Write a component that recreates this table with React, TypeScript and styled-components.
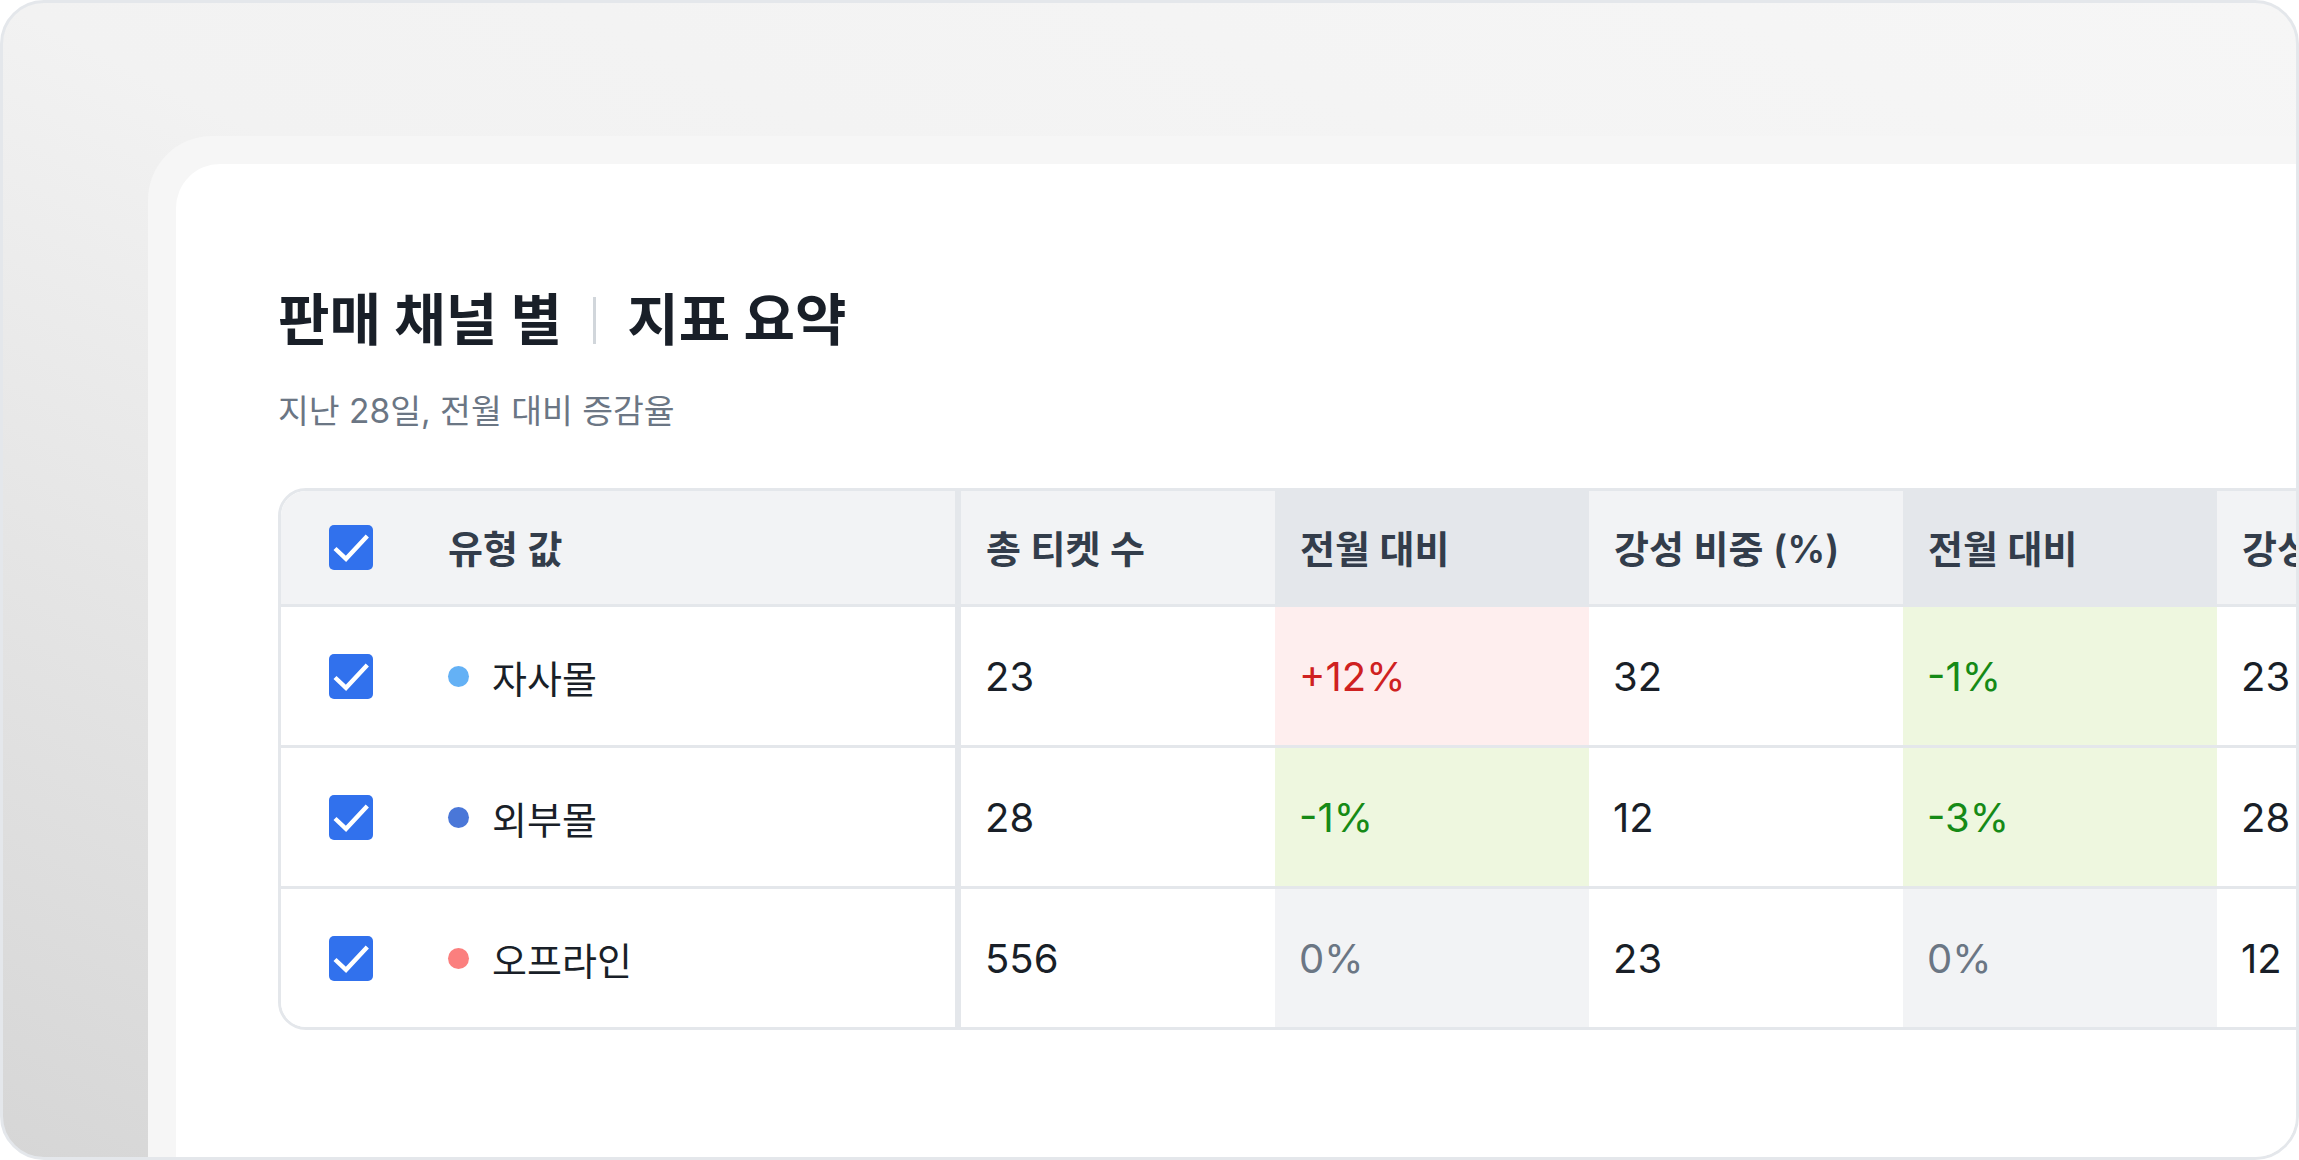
import React from "react";
import styled, { createGlobalStyle } from "styled-components";

const Global = createGlobalStyle`
  html, body { margin: 0; padding: 0; background: #ffffff; }
  body {
    font-family: Inter, "Noto Sans CJK KR", "Noto Sans", sans-serif;
    overflow: hidden;
  }
  * { box-sizing: border-box; }
`;

const Frame = styled.div`
  width: 2299px;
  height: 1160px;
  border: 3px solid #e4e7eb;
  border-radius: 44px;
  overflow: hidden;
  background: linear-gradient(to bottom left, #f6f6f6 0%, #f2f2f2 50%, #d6d6d6 100%);
  padding: 133px 0 0 145px;
  display: flex;
  flex-direction: column;
`;

const Layer = styled.div`
  flex: 1;
  background: #f6f6f6;
  border-top-left-radius: 64px;
  padding: 28px 0 0 28px;
  display: flex;
  flex-direction: column;
`;

const Panel = styled.div`
  flex: 1;
  background: #ffffff;
  border-top-left-radius: 44px;
  padding: 123px 0 0 102px;
  overflow: hidden;
`;

const Title = styled.h1`
  margin: 0;
  display: flex;
  align-items: center;
  gap: 31px;
  font-size: 56px;
  font-weight: 700;
  line-height: 67px;
  letter-spacing: 0;
  color: #191f28;
`;

const TitleDivider = styled.span`
  width: 3px;
  height: 47px;
  background: #d1d6db;
`;

const Subtitle = styled.p`
  margin: 35px 0 0;
  font-size: 33.5px;
  line-height: 45px;
  letter-spacing: 0;
  color: #6b7684;
`;

const Table = styled.div`
  margin-top: 54px;
  width: max-content;
  border: 3px solid #e4e7eb;
  border-radius: 28px;
  overflow: hidden;
`;

const COLS = "680px repeat(6, 314px)";

const HeaderRow = styled.div`
  display: grid;
  grid-template-columns: ${COLS};
  height: 116px;
  border-bottom: 3px solid #e4e7eb;
`;

const BodyRow = styled.div<{ $last?: boolean }>`
  display: grid;
  grid-template-columns: ${COLS};
  height: ${(p) => (p.$last ? "138px" : "141px")};
  border-bottom: ${(p) => (p.$last ? "none" : "3px solid #e4e7eb")};
`;

const NameCell = styled.div<{ $head?: boolean }>`
  display: flex;
  align-items: center;
  padding-left: 48px;
  border-right: 6px solid #e4e7eb;
  background: ${(p) => (p.$head ? "#f2f3f5" : "#ffffff")};
`;

const Checkbox = styled.svg`
  flex: none;
  width: 44px;
  height: 45px;
  margin-right: 75px;
`;

const HeadCell = styled.div<{ $dark?: boolean }>`
  display: flex;
  align-items: center;
  padding-left: 25px;
  background: ${(p) => (p.$dark ? "#e4e7eb" : "#f2f3f5")};
`;

const HeadText = styled.span`
  font-size: 38px;
  font-weight: 600;
  letter-spacing: 0;
  color: #333d4b;
  white-space: nowrap;
  margin-top: -3px;
`;

const Dot = styled.span<{ $color: string }>`
  flex: none;
  width: 21px;
  height: 21px;
  border-radius: 50%;
  background: ${(p) => p.$color};
  margin-right: 23px;
`;

const NameText = styled.span`
  font-size: 38px;
  letter-spacing: 0;
  color: #191f28;
  white-space: nowrap;
`;

type Tone = "up" | "down" | "flat" | "none";

const toneBg: Record<Tone, string> = {
  up: "#feeeee",
  down: "#eef7df",
  flat: "#f2f3f5",
  none: "#ffffff",
};
const toneFg: Record<Tone, string> = {
  up: "#cf2121",
  down: "#168a16",
  flat: "#6b7684",
  none: "#191f28",
};

const ValueCell = styled.div<{ $tone: Tone }>`
  display: flex;
  align-items: center;
  padding-left: 24px;
  font-size: 40px;
  font-weight: 400;
  color: ${(p) => toneFg[p.$tone]};
  background: ${(p) => toneBg[p.$tone]};
  white-space: nowrap;
`;

const CheckIcon = () => (
  <Checkbox viewBox="0 0 44 45">
    <rect x="0" y="0" width="44" height="45" rx="5" fill="#3171ed" />
    <path d="M6 23.5 L17 33.8 L38.3 11" fill="none" stroke="#ffffff" strokeWidth="4.4" />
  </Checkbox>
);

type Cell = { v: string; t: Tone };

const headers: { label: string; dark?: boolean }[] = [
  { label: "총 티켓 수" },
  { label: "전월 대비", dark: true },
  { label: "강성 비중 (%)" },
  { label: "전월 대비", dark: true },
  { label: "강성 비중 (%)" },
  { label: "전월 대비", dark: true },
];

const rows: { name: string; color: string; cells: Cell[] }[] = [
  {
    name: "자사몰",
    color: "#64b1f5",
    cells: [
      { v: "23", t: "none" },
      { v: "+12%", t: "up" },
      { v: "32", t: "none" },
      { v: "-1%", t: "down" },
      { v: "23", t: "none" },
      { v: "+2%", t: "up" },
    ],
  },
  {
    name: "외부몰",
    color: "#4a77d8",
    cells: [
      { v: "28", t: "none" },
      { v: "-1%", t: "down" },
      { v: "12", t: "none" },
      { v: "-3%", t: "down" },
      { v: "28", t: "none" },
      { v: "0%", t: "flat" },
    ],
  },
  {
    name: "오프라인",
    color: "#fb7f7e",
    cells: [
      { v: "556", t: "none" },
      { v: "0%", t: "flat" },
      { v: "23", t: "none" },
      { v: "0%", t: "flat" },
      { v: "12", t: "none" },
      { v: "-1%", t: "down" },
    ],
  },
];

export default function App() {
  return (
    <>
      <Global />
      <Frame>
        <Layer>
          <Panel>
            <Title>
              <span>판매 채널 별</span>
              <TitleDivider />
              <span>지표 요약</span>
            </Title>
            <Subtitle>지난 28일, 전월 대비 증감율</Subtitle>
            <Table>
              <HeaderRow>
                <NameCell $head>
                  <CheckIcon />
                  <HeadText>유형 값</HeadText>
                </NameCell>
                {headers.map((h, i) => (
                  <HeadCell key={i} $dark={h.dark}>
                    <HeadText>{h.label}</HeadText>
                  </HeadCell>
                ))}
              </HeaderRow>
              {rows.map((r, ri) => (
                <BodyRow key={r.name} $last={ri === rows.length - 1}>
                  <NameCell>
                    <CheckIcon />
                    <Dot $color={r.color} />
                    <NameText>{r.name}</NameText>
                  </NameCell>
                  {r.cells.map((c, ci) => (
                    <ValueCell key={ci} $tone={c.t}>
                      {c.v}
                    </ValueCell>
                  ))}
                </BodyRow>
              ))}
            </Table>
          </Panel>
        </Layer>
      </Frame>
    </>
  );
}
